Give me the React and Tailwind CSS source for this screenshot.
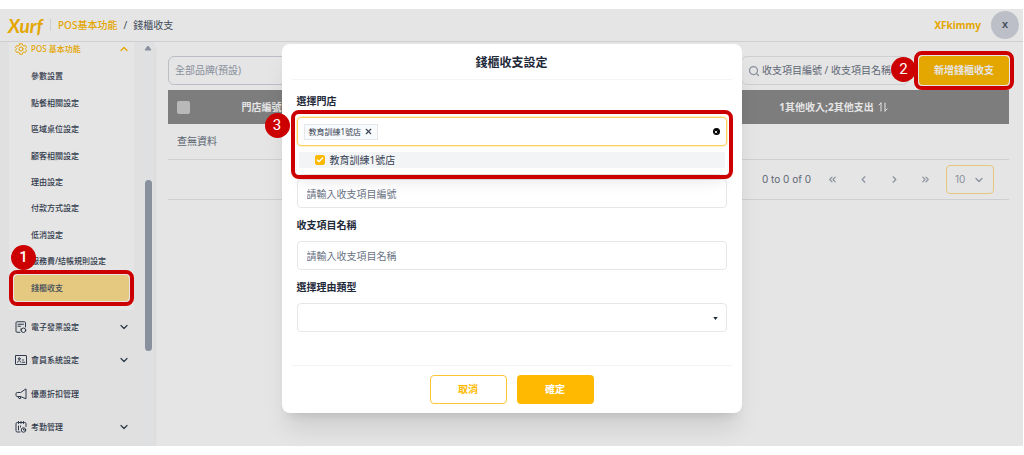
import { useState } from 'react';
import {
  Check,
  ChevronDown,
  ChevronLeft,
  ChevronRight,
  ChevronUp,
  ChevronsLeft,
  ChevronsRight,
  Search,
  X,
} from 'lucide-react';

const POS_ITEMS = [
  '參數設置',
  '點餐相關設定',
  '區域桌位設定',
  '顧客相關設定',
  '理由設定',
  '付款方式設定',
  '低消設定',
  '服務費/結帳規則設定',
  '錢櫃收支',
];

const GROUPS = [
  { label: '電子發票設定', icon: InvoiceIcon, expandable: true },
  { label: '會員系統設定', icon: MemberIcon, expandable: true },
  { label: '優惠折扣管理', icon: PromoIcon, expandable: false },
  { label: '考勤管理', icon: AttendanceIcon, expandable: true },
];

const STORE = '教育訓練1號店';

const SVG_PROPS = {
  viewBox: '0 0 24 24',
  fill: 'none',
  stroke: 'currentColor',
  strokeWidth: 2,
  strokeLinecap: 'round',
  strokeLinejoin: 'round',
  'aria-hidden': true,
};

function GearIcon() {
  return (
    <svg {...SVG_PROPS} className="size-3 shrink-0">
      <path d="M9.5 1.5h5l.8 3.1 2.4 1.4 3-.9 2.5 4.3-2.2 2.1v1l2.2 2.1-2.5 4.3-3-.9-2.4 1.4-.8 3.1h-5l-.8-3.1L6.3 18l-3 .9L.8 14.6 3 12.5v-1L.8 9.400l2.500-4.300 3 .9 2.400-1.400z" />
      <circle cx="12" cy="12" r="4" />
    </svg>
  );
}

function InvoiceIcon() {
  return (
    <svg {...SVG_PROPS} className="size-3 shrink-0">
      <path d="M10 22.500H4a2 2 0 0 1-2-2v-17a2 2 0 0 1 2-2h15a2 2 0 0 1 2 2V12" />
      <path d="M6 6.500h11M6 10.500h5" />
      <circle cx="17" cy="18.500" r="4.500" />
      <path d="M12 15.500v3" />
    </svg>
  );
}

function MemberIcon() {
  return (
    <svg {...SVG_PROPS} className="size-3 shrink-0">
      <rect x="1" y="3" width="22" height="18" rx="1" />
      <circle cx="8.500" cy="9.500" r="2" />
      <path d="M5 16.500c0-4 7-4 7 0M15 12h2M15 16.500h4.500" />
    </svg>
  );
}

function PromoIcon() {
  return (
    <svg {...SVG_PROPS} className="size-3 shrink-0">
      <path d="M22 2.500v19L10.500 17H4.500a2.500 2.500 0 0 1-2.500-2.500v-3A2.500 2.500 0 0 1 4.500 9h6z" />
      <path d="M6 17.500 8 21h3v-3.500" />
    </svg>
  );
}

function AttendanceIcon() {
  return (
    <svg {...SVG_PROPS} className="size-3 shrink-0">
      <path d="M10 22H4.500A2.500 2.500 0 0 1 2 19.500v-14A2.500 2.500 0 0 1 4.500 3h15A2.500 2.500 0 0 1 22 5.500V11" />
      <path d="M7 1v4M12 1v4M17 1v4M7 10v8M11 10v2" />
      <circle cx="17" cy="18" r="4.500" />
      <path d="M17 16v2h2" />
    </svg>
  );
}

function SortIcon() {
  return (
    <svg {...SVG_PROPS} className="size-3 shrink-0">
      <path d="M8 20V4M4 8l4-4M16 4v16M20 16l-4 4" />
    </svg>
  );
}

// red numbered step marker
function Step({ n, className }) {
  return (
    <span
      className={`absolute z-30 flex size-[25px] items-center justify-center rounded-full bg-[#cc0000] font-[Roboto,sans-serif] text-[15px] leading-none text-white ${className}`}
    >
      {n}
    </span>
  );
}

function Outline({ className }) {
  return (
    <span
      className={`pointer-events-none absolute z-20 rounded-lg border-4 border-[#cc0000] ${className}`}
    />
  );
}

function TopBar() {
  return (
    <header className="flex h-[33px] shrink-0 items-center border-b border-gray-200 pr-1 pl-2 text-[10px]">
      <a
        href="#home"
        className="w-[34px] font-[Lato,sans-serif] text-[19px] leading-none font-bold text-[#feb900] italic"
      >
        Xurf
      </a>
      <span className="ml-2 h-3 w-px bg-gray-200" />
      <nav className="ml-[7px] flex gap-1.5 text-gray-600">
        <a href="#pos" className="font-medium text-[#feb900]">
          POS基本功能
        </a>
        <span>/</span>
        <span>錢櫃收支</span>
      </nav>
      <span className="ml-auto font-bold text-[#feb900]">XFkimmy</span>
      <button className="ml-2.5 size-7 rounded-full bg-[#d2d5de] text-[9px] font-bold text-gray-600">
        X
      </button>
    </header>
  );
}

function Sidebar() {
  return (
    <aside className="flex w-[154px] shrink-0 bg-[#fafafa] text-[8px] font-medium text-gray-700 shadow-md">
      <div className="ml-[9px] w-[125px]">
        <div className="bg-white pb-[9px]">
          <button className="flex h-[13px] w-full items-center gap-1 pr-1 pl-[6px] text-[#feb900]">
            <GearIcon />
            POS 基本功能
            <ChevronUp size={12} strokeWidth={2.5} className="ml-auto" />
          </button>
          <ul className="mx-[5px] mt-2 grid h-[238px] auto-rows-fr">
            {POS_ITEMS.map((item) =>
              item === '錢櫃收支' ? (
                <li key={item} className="relative flex">
                  <a
                    href="#cash"
                    className="flex flex-1 items-center rounded bg-[#ffe090] pl-[17px] text-gray-600"
                  >
                    {item}
                  </a>
                  <Outline className="-inset-[5px]" />
                  <Step n={1} className="-top-[30px] -left-[3px]" />
                </li>
              ) : (
                <li key={item} className="flex">
                  <a href="#item" className="flex flex-1 items-center pl-[17px]">
                    {item}
                  </a>
                </li>
              ),
            )}
          </ul>
        </div>
        <div className="grid h-[134px] auto-rows-fr">
          {GROUPS.map(({ label, icon: Icon, expandable }) => (
            <button key={label} className="flex items-center gap-1 pr-1 pl-[6px]">
              <Icon />
              {label}
              {expandable && <ChevronDown size={12} strokeWidth={2.5} className="ml-auto" />}
            </button>
          ))}
        </div>
      </div>
      {/* scrollbar */}
      <div className="ml-2 flex w-3 flex-col items-center bg-[#f8fafc] pt-[3px]">
        <svg viewBox="0 0 8 6" className="h-1.5 w-2 text-gray-400" aria-hidden="true">
          <path d="M4 1 7 5H1z" fill="currentColor" stroke="currentColor" strokeLinejoin="round" />
        </svg>
        <div className="mt-[129px] h-[171px] w-[7px] rounded-full bg-gray-400" />
      </div>
    </aside>
  );
}

function HeadCell({ children, className = '' }) {
  return (
    <th className={`font-bold ${className}`}>
      <span className="flex items-center justify-center gap-[3px]">
        {children}
        <SortIcon />
      </span>
    </th>
  );
}

function CashPage() {
  return (
    <main className="min-w-0 flex-1 px-3.5 pt-[14px] text-[10px] text-gray-500">
      <div className="flex h-[29px] gap-2.5">
        <select
          aria-label="品牌"
          className="w-[180px] appearance-none rounded-md border border-gray-300 px-1.5 text-gray-400"
        >
          <option>全部品牌(預設)</option>
        </select>
        <label className="ml-auto flex w-[168px] items-center gap-0.5 rounded-md border border-gray-200 pl-1.5">
          <Search size={12} strokeWidth={2.5} className="shrink-0 text-gray-400" />
          <input
            aria-label="搜尋"
            placeholder="收支項目編號 / 收支項目名稱"
            className="min-w-0 flex-1 outline-none placeholder:text-gray-500"
          />
        </label>
        <div className="relative flex">
          <button className="w-[90px] rounded bg-[#feb900] font-bold text-white">新增錢櫃收支</button>
          <Outline className="-inset-[5px]" />
          <Step n={2} className="top-px -left-7" />
        </div>
      </div>

      <table className="mt-[5px] w-full table-fixed">
        <thead>
          <tr className="h-[34px] bg-[#8c8c8c] text-white">
            <th className="w-8 pl-[9px]">
              <input
                type="checkbox"
                aria-label="全選"
                className="block size-[13px] appearance-none rounded-xs bg-[#cfcfcf]"
              />
            </th>
            <HeadCell className="w-[138px]">門店編號</HeadCell>
            <HeadCell>收支項目編號</HeadCell>
            <HeadCell>收支項目名稱</HeadCell>
            <HeadCell className="w-[350px]">1其他收入;2其他支出</HeadCell>
          </tr>
        </thead>
        <tbody>
          <tr className="h-[35px] border-b border-gray-200">
            <td colSpan={5} className="pl-[9px]">
              查無資料
            </td>
          </tr>
        </tbody>
      </table>

      <div className="flex h-10 items-center justify-end border-b border-gray-200 pr-[15px] text-gray-400">
        <span className="mr-4 font-[Inter,sans-serif] text-[10px] text-gray-500">0 to 0 of 0</span>
        <div className="mr-[15px] flex gap-5">
          <button aria-label="第一頁">
            <ChevronsLeft size={11} strokeWidth={2.5} />
          </button>
          <button aria-label="上一頁">
            <ChevronLeft size={11} strokeWidth={2.5} />
          </button>
          <button aria-label="下一頁">
            <ChevronRight size={11} strokeWidth={2.5} />
          </button>
          <button aria-label="最後一頁">
            <ChevronsRight size={11} strokeWidth={2.5} />
          </button>
        </div>
        <div className="relative">
          <select
            aria-label="每頁筆數"
            className="h-[29px] w-12 appearance-none rounded border border-[#ffdf8c] pl-2 font-[Inter,sans-serif]"
          >
            <option>10</option>
          </select>
          <ChevronDown
            size={12}
            strokeWidth={2.5}
            className="pointer-events-none absolute top-[9px] right-[9px]"
          />
        </div>
      </div>
    </main>
  );
}

function StoreSelect() {
  const [picked, setPicked] = useState(true);

  return (
    <div className="relative">
      <div className="flex h-[29px] items-center rounded border border-[#fbcf62] px-[6px] ring-1 ring-[#fff0c8]">
        {picked && (
          <span className="flex h-4 items-center gap-[3px] border border-gray-200 bg-gray-50 px-1 text-[8px] text-gray-700">
            {STORE}
            <button type="button" aria-label="移除" onClick={() => setPicked(false)}>
              <X size={9} strokeWidth={3} />
            </button>
          </span>
        )}
        <button
          type="button"
          aria-label="清除"
          onClick={() => setPicked(false)}
          className="ml-auto flex size-[7px] items-center justify-center rounded-full bg-black text-white"
        >
          <X size={4} strokeWidth={5} />
        </button>
      </div>
      <div className="absolute inset-x-0 top-full z-10 mt-0.5 bg-white px-0.5 pt-1 pb-1.5 shadow-lg">
        <label className="flex h-4 items-center gap-[5px] bg-gray-100 pl-4 text-gray-700">
          <span className="relative flex">
            <input
              type="checkbox"
              checked={picked}
              onChange={(e) => setPicked(e.target.checked)}
              className="size-2.5 appearance-none rounded-xs border border-[#feb900] checked:bg-[#feb900]"
            />
            <Check
              size={8}
              strokeWidth={4}
              className="pointer-events-none absolute top-px left-px text-white"
            />
          </span>
          {STORE}
        </label>
      </div>
      <Outline className="-inset-x-[6px] -top-[7px] h-[69px]" />
      <Step n={3} className="-top-1 -left-8" />
    </div>
  );
}

function CashDialog() {
  const labelClass = 'flex h-[33px] items-center pt-0.5 font-bold';
  const inputClass =
    'block h-[29px] w-full rounded border border-gray-200 bg-white px-[9px] outline-none placeholder:text-gray-500';

  return (
    <form
      role="dialog"
      aria-labelledby="dialog-title"
      className="w-[460px] rounded-lg bg-white text-[10px] text-gray-800 shadow-xl"
    >
      <h2
        id="dialog-title"
        className="mx-2.5 flex h-9 items-center justify-center border-b border-gray-100 pt-0.5 text-xs font-bold"
      >
        錢櫃收支設定
      </h2>
      <div className="px-[15px] pt-1 pb-[33px]">
        <div className={labelClass}>選擇門店</div>
        <StoreSelect />
        {/* the open option list covers this gap */}
        <input
          aria-label="收支項目編號"
          placeholder="請輸入收支項目編號"
          className={`mt-[33px] ${inputClass}`}
        />
        <label htmlFor="name" className={labelClass}>
          收支項目名稱
        </label>
        <input id="name" placeholder="請輸入收支項目名稱" className={inputClass} />
        <label htmlFor="reason" className={labelClass}>
          選擇理由類型
        </label>
        <div className="relative">
          <select id="reason" className={`appearance-none ${inputClass}`}>
            <option></option>
          </select>
          <svg
            viewBox="0 0 6 4"
            className="pointer-events-none absolute top-[14px] right-[9px] h-[3px] w-[5px]"
            aria-hidden="true"
          >
            <path d="M0 0h6L3 4z" fill="currentColor" />
          </svg>
        </div>
      </div>
      <div className="mx-2.5 flex h-12 justify-center gap-2.5 border-t border-gray-100 pt-[9px] font-bold">
        <button type="button" className="h-[29px] w-[77px] rounded border border-[#fdc536] text-[#feb900]">
          取消
        </button>
        <button type="button" className="h-[29px] w-[77px] rounded bg-[#feb900] text-white">
          確定
        </button>
      </div>
    </form>
  );
}

export default function App() {
  return (
    <div className="h-screen bg-white py-[9px] pr-px font-['Noto_Sans','Noto_Sans_CJK_TC',sans-serif]">
      <div className="relative flex h-full flex-col">
        <TopBar />
        <div className="flex min-h-0 flex-1 overflow-hidden">
          <Sidebar />
          <CashPage />
        </div>
        {/* dimmed backdrop */}
        <div className="absolute inset-0 z-10 flex items-start justify-center bg-black/10 pt-[35px]">
          <CashDialog />
        </div>
      </div>
    </div>
  );
}
